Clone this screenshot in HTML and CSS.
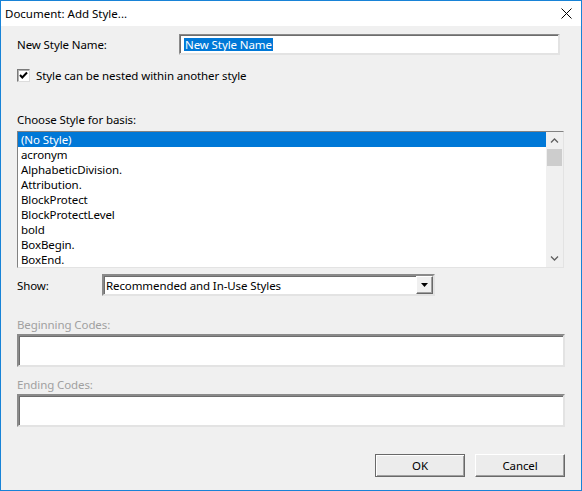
FILE: index.html
```html
<!DOCTYPE html>
<html>
<head>
<meta charset="utf-8">
<title>Document: Add Style...</title>
<link rel="stylesheet" href="styles.css">
</head>
<body>
<div class="window">
  <div class="titlebar">
    <span class="title">Document: Add Style...</span>
    <svg class="close" width="11" height="11" viewBox="0 0 11 11"><path d="M0.5 0.5 L10.5 10.5 M10.5 0.5 L0.5 10.5" stroke="#000" stroke-width="1" fill="none"/></svg>
  </div>
  <div class="content">
    <div class="name-row">
      <span class="label">New Style Name:</span>
      <div class="textbox name-box"><span class="sel">New Style Name</span></div>
    </div>
    <div class="check-row">
      <span class="checkbox"><svg width="11" height="11" viewBox="0 0 11 11"><path d="M2 5 L4.3 7.5 L9 2.5" stroke="#000" stroke-width="2" fill="none"/></svg></span>
      <span class="label">Style can be nested within another style</span>
    </div>
    <div class="label basis-label">Choose Style for basis:</div>
    <div class="listbox">
      <ul class="items">
        <li class="selected">(No Style)</li>
        <li>acronym</li>
        <li>AlphabeticDivision.</li>
        <li>Attribution.</li>
        <li>BlockProtect</li>
        <li>BlockProtectLevel</li>
        <li>bold</li>
        <li>BoxBegin.</li>
        <li>BoxEnd.</li>
      </ul>
      <div class="scrollbar">
        <svg class="arrow" width="17" height="17" viewBox="0 0 17 17"><path d="M5 10.5 L8.5 7 L12 10.5" stroke="#606060" stroke-width="1.3" fill="none"/></svg>
        <div class="thumb"></div>
        <div class="track"></div>
        <svg class="arrow" width="17" height="17" viewBox="0 0 17 17"><path d="M5 6.5 L8.5 10 L12 6.5" stroke="#606060" stroke-width="1.3" fill="none"/></svg>
      </div>
    </div>
    <div class="show-row">
      <span class="label show-label">Show:</span>
      <div class="combo">
        <span class="combo-text">Recommended and In-Use Styles</span>
        <span class="drop"><svg width="9" height="6" viewBox="0 0 9 6"><path d="M1 1 H8 L4.5 5 Z" fill="#000"/></svg></span>
      </div>
    </div>
    <div class="label disabled begin-label">Beginning Codes:</div>
    <div class="textbox code-box"></div>
    <div class="label disabled end-label">Ending Codes:</div>
    <div class="textbox code-box"></div>
    <div class="buttons">
      <button class="btn default">OK</button>
      <button class="btn">Cancel</button>
    </div>
  </div>
</div>
</body>
</html>
```
FILE: styles.css
```css
* { box-sizing: border-box; }
html, body { margin: 0; padding: 0; }
body {
  font-family: "Noto Sans", "Open Sans", sans-serif;
  font-size: 11.5px;
  letter-spacing: -0.1px;
  color: #000;
  background: #f0f0f0;
}
.window {
  width: 582px;
  height: 491px;
  border: 1px solid #1883d7;
  background: #f0f0f0;
  display: flex;
  flex-direction: column;
}
.titlebar {
  height: 25px;
  background: #fff;
  display: flex;
  align-items: center;
  justify-content: space-between;
  padding: 0 9px 0 4px;
  flex: none;
}
.title { font-size: 11.5px; line-height: 16px; letter-spacing: 0; }
.close { display: block; }
.content {
  padding: 0 17px 0 16px;
  display: flex;
  flex-direction: column;
}
.label { line-height: 15px; white-space: nowrap; }
.disabled { color: #a0a0a0; }

.textbox {
  background: #fff;
  border-style: solid;
  border-width: 2px;
  border-color: #8a8a8a #e3e3e3 #e3e3e3 #8a8a8a;
  box-shadow: inset 1px 1px 0 #6d6d6d;
}
.name-row {
  display: flex;
  align-items: center;
  margin-top: 8px;
  height: 21px;
}
.name-row .label { width: 162px; }
.name-box {
  width: 381px;
  height: 21px;
  padding: 2px 0 0 4px;
  border-width: 1px 2px 2px 1px;
}
.sel {
  display: inline-block;
  background: #0078d7;
  color: #fff;
  line-height: 13px;
  padding: 0 1px;
  vertical-align: top;
  margin-top: 1px;
}
.check-row {
  display: flex;
  align-items: center;
  margin-top: 14px;
  height: 13px;
  gap: 6px;
}
.checkbox {
  width: 13px;
  height: 13px;
  background: #fff;
  border: 1px solid;
  border-color: #7a7a7a #dcdcdc #dcdcdc #7a7a7a;
  box-shadow: inset 1px 1px 0 #b0b0b0;
  display: flex;
  align-items: center;
  justify-content: center;
}
.checkbox svg { display: block; }
.basis-label { margin-top: 30px; }
.listbox {
  margin-top: 4px;
  width: 547px;
  height: 137px;
  background: #fff;
  border-style: solid;
  border-width: 1px;
  border-color: #828282 #e3e3e3 #e3e3e3 #828282;
  display: flex;
}
.items {
  list-style: none;
  margin: 0;
  padding: 0;
  flex: 1;
}
.items li {
  height: 15px;
  line-height: 15px;
  padding-left: 3px;
  white-space: nowrap;
}
.items li.selected { background: #0078d7; color: #fff; }
.scrollbar {
  width: 17px;
  background: #f0f0f0;
  display: flex;
  flex-direction: column;
}
.arrow { display: block; flex: none; }
.thumb {
  height: 17px;
  margin: 0 1px;
  background: #cdcdcd;
  flex: none;
}
.track { flex: 1; }
.show-row {
  display: flex;
  align-items: center;
  margin-top: 6px;
  height: 22px;
}
.show-label { width: 85px; }
.combo {
  width: 333px;
  height: 22px;
  background: #fff;
  border-style: solid;
  border-width: 2px;
  border-color: #8a8a8a #e3e3e3 #e3e3e3 #8a8a8a;
  box-shadow: inset 1px 1px 0 #6d6d6d;
  display: flex;
  align-items: center;
  justify-content: space-between;
  padding-left: 2px;
}
.combo-text { line-height: 15px; }
.drop {
  width: 17px;
  height: 18px;
  background: #f0f0f0;
  border-style: solid;
  border-width: 1px;
  border-color: #fff #696969 #696969 #fff;
  box-shadow: inset -1px -1px 0 #a0a0a0;
  display: flex;
  align-items: center;
  justify-content: center;
}
.drop svg { display: block; }
.begin-label { margin-top: 21px; }
.code-box { height: 33px; width: 548px; margin-top: 2px; }
.end-label { margin-top: 10px; }
.buttons {
  display: flex;
  justify-content: flex-end;
  gap: 10px;
  margin-top: 27px;
  margin-right: -1px;
}
.btn {
  width: 90px;
  height: 23px;
  font-family: inherit;
  font-size: 11.5px;
  letter-spacing: inherit;
  color: #000;
  background: #ececec;
  border-style: solid;
  border-width: 1px;
  border-color: #fff #696969 #696969 #fff;
  box-shadow: inset -1px -1px 0 #a0a0a0;
  padding: 0;
  line-height: 15px;
}
.btn.default {
  border: 1px solid #696969;
  box-shadow: inset 1px 1px 0 #fff, inset -1px -1px 0 #a0a0a0;
}
```
